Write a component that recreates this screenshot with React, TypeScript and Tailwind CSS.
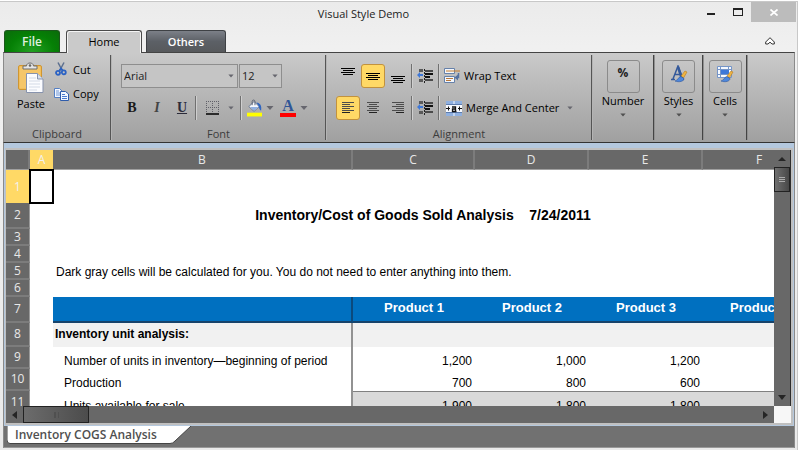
import type { ReactNode } from 'react';

const buttonBase = 'flex h-6 w-6 shrink-0 items-center justify-center';
const activeButton = 'rounded-[3px] border border-[#c2923d] bg-[#ffd966]';

function Caret({ size = 'w-2', color = 'text-[#66666e]' }: { size?: string; color?: string }) {
  return (
    <svg viewBox="0 0 8 4" className={`h-1 shrink-0 ${size} ${color}`} aria-hidden="true">
      <path d="M0.5 0h7L4 4z" fill="currentColor" />
    </svg>
  );
}

function Divider() {
  return <span className="h-6 w-px shrink-0 bg-[#707070] shadow-[1px_0_0_#cfcfcf]" />;
}

function Group({ label, className, children }: { label: string; className: string; children: ReactNode }) {
  return (
    <section aria-label={label} className={`my-0.5 mr-px flex shrink-0 flex-col border-r border-[#555] shadow-[1px_0_0_#b4b4b4] ${className}`}>
      <div className="flex-1">{children}</div>
      <div className="h-4 text-center text-[11px] leading-5 text-[#3c3c3c]">{label}</div>
    </section>
  );
}

function CollapsedGroup({ label, className, children }: { label: string; className: string; children: ReactNode }) {
  return (
    <button type="button" className={`my-0.5 mr-px flex shrink-0 flex-col items-center border-r border-[#444] pt-[5px] shadow-[1px_0_0_#909090] ${className}`}>
      <span className="flex h-[33px] w-[33px] justify-center rounded-[3px] border border-[#8b8b8b] pt-1">{children}</span>
      <span className="mb-1 text-[11px] leading-4 text-black">{label}</span>
      <Caret size="w-1.5" color="text-[#505050]" />
    </button>
  );
}

function PasteIcon() {
  return (
    <svg width="28" height="32" viewBox="0 0 28 32" aria-hidden="true">
      <rect x="1.5" y="3.500" width="23" height="24" rx="1.500" fill="#f2be5a" stroke="#cf9632" />
      <rect x="3" y="5" width="20" height="21" fill="#f8cd78" opacity=".5" />
      <path d="M6 7V4h3.500c0-4 7-4 7 0H20v3z" fill="#e6e6e6" stroke="#6d6d6d" />
      <circle cx="13" cy="3.500" r="1.300" fill="#666" />
      <path d="M9.500 11.500h11l5.500 5.500v13.500H9.500z" fill="#fbfcff" stroke="#8793ad" />
      <path d="M20.500 11.500V17H26" fill="#d8e0ee" stroke="#8793ad" />
      <path d="M12 16h7M12 19h11M12 22h11M12 25h11M12 28h8" stroke="#d3dae6" />
    </svg>
  );
}

function CutIcon() {
  return (
    <svg width="12" height="14" viewBox="0 0 12 14" aria-hidden="true">
      <path d="M3 0.500 7.500 9M9 0.500 4.500 9" stroke="#5c6f8e" strokeWidth="1.500" fill="none" />
      <circle cx="3" cy="10.800" r="2" fill="none" stroke="#2b62c4" strokeWidth="1.800" />
      <circle cx="8.800" cy="10.300" r="2" fill="none" stroke="#2b62c4" strokeWidth="1.800" />
      <path d="M4.500 8.500 6 6.500l1.800 2" stroke="#2b62c4" strokeWidth="1.800" fill="none" />
    </svg>
  );
}

function CopyIcon() {
  return (
    <svg width="15" height="13" viewBox="0 0 15 13" aria-hidden="true">
      <path d="M.5.500h5L8 3v6.500H.5z" fill="#f4f8ff" stroke="#5580c4" />
      <path d="M2 3h3M2 5h4M2 7h4" stroke="#6f96d4" />
      <path d="M6.500 3.500h5L14.500 6v6.500h-8z" fill="#f4f8ff" stroke="#2f5cab" />
      <path d="M8 6.500h3M8 8.500h5M8 10.500h5" stroke="#4a7bd0" />
    </svg>
  );
}

function BordersIcon() {
  return (
    <svg width="14" height="14" viewBox="0 0 14 14" aria-hidden="true">
      <path d="M0 .5h13M0 6.500h13M.5 0v12M6.500 0v12M12.500 0v12" stroke="#606068" strokeDasharray="1 1" />
      <path d="M0 13h13" stroke="#000" strokeWidth="1.500" />
    </svg>
  );
}

function FillIcon() {
  return (
    <svg width="16" height="18" viewBox="0 0 16 18" aria-hidden="true">
      <path d="M7.500 2 13 7.500 7.500 12.500 2 7.500z" fill="#f4f7fc" stroke="#60708e" />
      <path d="M3.500 8h8.500L7.500 12z" fill="#8fb0e2" />
      <path d="M5.500 6V2c0-2 3-2 3 0v4" fill="none" stroke="#5a6272" />
      <path d="M10 3c4 .5 6 3 5 9-2-1-2-4-3-6z" fill="#2e64c0" />
      <path d="M0 14h16v4H0z" fill="#ff0" />
    </svg>
  );
}

function FontColorIcon() {
  return (
    <span className="flex w-4 flex-col items-center">
      <span className="h-3.5 font-['Liberation_Serif',serif] text-base leading-[14px] font-bold text-[#2f5597]">A</span>
      <span className="h-1 w-4 bg-[#f00]" />
    </span>
  );
}

function Lines({ offset, align }: { offset: 'top' | 'middle' | 'bottom' | 'text'; align: 'left' | 'center' | 'right' }) {
  if (offset === 'text') {
    return (
      <svg width="14" height="12" viewBox="0 0 14 12" aria-hidden="true">
        {[12, 8, 12, 8, 12, 8].map((width, row) => (
          <rect
            key={row}
            x={align === 'left' ? 1 : align === 'right' ? 13 - width : (14 - width) / 2}
            y={row * 2}
            width={width}
            height="1"
            fill={row === 5 ? '#222' : '#4c4c4c'}
          />
        ))}
      </svg>
    );
  }
  const y = offset === 'top' ? 2 : offset === 'middle' ? 7 : 10;
  return (
    <svg width="14" height="20" viewBox="0 0 14 20" aria-hidden="true">
      <path d={`M0 ${y + 0.5}h14M2 ${y + 2.5}h10M0 ${y + 4.5}h14M2 ${y + 6.5}h10`} stroke="#000" />
    </svg>
  );
}

function IndentIcon() {
  return (
    <svg width="16" height="15" viewBox="0 0 16 15" aria-hidden="true">
      <path d="M2 0h4v3H2zM2 10h4v3H2z" fill="#5a5a5a" />
      <path d="M8 1h8v2H8zM8 10h8v2H8z" fill="#4a4a4a" />
      <path d="M8 4h8v2H8zM8 7h5v2H8z" fill="#111" />
      <path d="M7.500 0v15" stroke="#222" strokeDasharray="2 1" />
      <path d="M0 6l3-3v2h3v2H3v2z" fill="#3e78d8" />
    </svg>
  );
}

function WrapIcon() {
  return (
    <svg width="16" height="16" viewBox="0 0 16 16" aria-hidden="true">
      <path d="M.5 .5h10v5H.5zM.5 8.500h10v6H.5z" fill="#f4f7fc" stroke="#6681aa" />
      <path d="M2 3h14" stroke="#c67c2c" />
      <path d="M2 10.500h7M2 12.500h5" stroke="#b8783c" />
      <path d="M14.500 5v4.500H13" fill="none" stroke="#5671a0" strokeWidth="1.500" />
      <path d="M14 6.500v6L10.500 9.500z" fill="#5671a0" />
    </svg>
  );
}

function MergeIcon() {
  return (
    <svg width="16" height="15" viewBox="0 0 16 15" aria-hidden="true">
      <path d="M0 0h16v15H0z" fill="#f7faff" />
      <path d="M0 0h7.500v3H0zM8.500 0H16v3H8.500zM0 12h7.500v3H0zM8.500 12H16v3H8.500z" fill="#8fb0e0" />
      <path d="M0 3.500h16M0 11.500h16" stroke="#5d7cae" />
      <path d="M0 7.500h4M2.500 5.500v4M12 7.500h4M13.500 5.500v4" stroke="#111" />
      <path d="M6 6h3.500v4.500M9.500 8H6.500v2.500h4" fill="none" stroke="#111" strokeWidth="1.300" />
    </svg>
  );
}

function Brush() {
  return (
    <>
      <path d="m11 11 4-5 2 1-3.500 6z" fill="#efb443" stroke="#b67c21" strokeWidth=".6" />
      <path d="M5 16c3-.5 3-4 6-4.500l3 2c0 3-5 4-9 2.500z" fill="#4d87dc" stroke="#2a559f" strokeWidth=".6" />
    </>
  );
}

function StylesIcon() {
  return (
    <svg width="18" height="18" viewBox="0 0 18 18" aria-hidden="true">
      <path d="M1 14.500h4M8 14.500h6M3 14 8 1l5 13M5 9.500h6" fill="none" stroke="#34599a" strokeWidth="1.500" />
      <path d="m8 2 4 12" stroke="#34599a" strokeWidth="2.500" />
      <Brush />
    </svg>
  );
}

function CellsIcon() {
  return (
    <svg width="18" height="18" viewBox="0 0 18 18" aria-hidden="true">
      <path d="M1.500 1.500h14v11h-14z" fill="#f5f9ff" stroke="#7595c8" />
      <path d="M4.500 1v11M1 4.500h15M1 9.500h15M12.500 1v11" stroke="#7595c8" />
      <path d="M5 5h8v4H5z" fill="#3d78d8" />
      <Brush />
    </svg>
  );
}

function TitleBar() {
  return (
    <header className="flex h-7 shrink-0 pr-px">
      <h1 className="flex-1 pl-[30px] text-center text-[11px] leading-6 text-[#222]">Visual Style Demo</h1>
      <button type="button" aria-label="Minimize" className="flex h-5 w-7 items-center justify-center">
        <span className="mt-1 h-0.5 w-2 bg-[#222]" />
      </button>
      <button type="button" aria-label="Maximize" className="flex h-5 w-[26px] items-center justify-center">
        <span className="h-2 w-2.5 border border-t-2 border-[#222]" />
      </button>
      <button type="button" aria-label="Close" className="flex h-5 w-[45px] items-center justify-center bg-[#bcbcbc]">
        <svg width="8" height="7" viewBox="0 0 8 7" aria-hidden="true">
          <path d="m.5.500 7 6m0-6-7 6" stroke="#fff" strokeWidth="1.700" />
        </svg>
      </button>
    </header>
  );
}

function RibbonTabs() {
  return (
    <nav className="relative flex h-[22px] shrink-0 items-end pl-1 text-[11px] leading-4">
      <button type="button" className="mr-1.5 h-[22px] w-14 rounded-t-[3px] border border-b-0 border-[#1b571b] bg-[radial-gradient(ellipse_at_bottom,#23a023,#058005_60%,#0b6b0b)] text-xs font-semibold text-[#dff0df]">
        File
      </button>
      <button type="button" aria-current="page" className="z-10 -mb-px mr-1 h-[23px] w-[76px] rounded-t-[3px] border border-b-0 border-[#4a4a4a] bg-[#cacaca] pb-px text-black shadow-[inset_1px_1px_0_#f4f4f4,inset_-1px_0_0_#f4f4f4]">
        Home
      </button>
      <button type="button" className="h-[22px] w-20 rounded-t-[3px] border border-b-0 border-[#3e4145] bg-linear-to-b from-[#7c8088] via-[#5c6066] to-[#57595c] font-semibold text-white">
        Others
      </button>
      <button type="button" aria-label="Collapse ribbon" className="mr-[21px] ml-auto flex h-[22px] w-3 items-center justify-center">
        <svg width="10" height="8" viewBox="0 0 10 8" aria-hidden="true">
          <path d="M5 .7 9.300 5v2H7L5 5.200 3 7H.7V5z" fill="#fff" stroke="#333" />
        </svg>
      </button>
    </nav>
  );
}

function Ribbon() {
  return (
    <div className="mr-0.5 ml-[3px] flex h-[91px] shrink-0 overflow-hidden border border-x-[#8a8a8a] border-t-[#444] border-b-[#333] bg-linear-to-b from-[#cacaca] to-[#a0a0a0] text-[11px] leading-4">
      <Group label="Clipboard" className="w-[107px]">
        <div className="flex pt-[7px]">
          <button type="button" className="ml-[5px] flex w-11 flex-col items-center">
            <PasteIcon />
            <span className="pt-0.5">Paste</span>
          </button>
          <div className="flex flex-col">
            <button type="button" className="flex h-6 items-start gap-1">
              <span className="flex w-4 justify-center"><CutIcon /></span>Cut
            </button>
            <button type="button" className="flex h-6 items-start gap-1">
              <span className="flex w-4 justify-center pt-0.5"><CopyIcon /></span>Copy
            </button>
          </div>
        </div>
      </Group>

      <Group label="Font" className="w-[214px]">
        <div className="flex gap-px pt-[9px] pl-[9px]">
          <label className="relative flex items-center">
            <select aria-label="Font family" className="h-6 w-[117px] appearance-none border border-[#8e8e8e] bg-[#c5c5c5] pl-0.5 leading-5 text-[#222]">
              <option>Arial</option>
            </select>
            <span className="pointer-events-none absolute right-1 flex"><Caret size="w-1.5" /></span>
          </label>
          <label className="relative flex items-center">
            <select aria-label="Font size" className="h-6 w-[43px] appearance-none border border-[#8e8e8e] bg-[#c5c5c5] pl-0.5 leading-5 text-[#222]">
              <option>12</option>
            </select>
            <span className="pointer-events-none absolute right-1 flex"><Caret size="w-1.5" /></span>
          </label>
        </div>
        <div className="flex items-center pt-2 pl-2 font-['Liberation_Serif',serif] text-sm font-bold text-[#1a1a1a]">
          <button type="button" aria-label="Bold" className={`${buttonBase} mr-px`}>B</button>
          <button type="button" aria-label="Italic" className={`${buttonBase} mr-px text-[#444] italic`}>I</button>
          <button type="button" aria-label="Underline" className={`${buttonBase} mr-px text-[#2b2b3a] underline`}>U</button>
          <Divider />
          <button type="button" aria-label="Borders" className="flex h-6 w-11 items-center gap-2 pl-2.5"><BordersIcon /><Caret size="w-1.5" /></button>
          <Divider />
          <button type="button" aria-label="Fill color" className="flex h-6 w-[33px] items-center gap-1 pl-1.5"><FillIcon /><Caret /></button>
          <button type="button" aria-label="Font color" className="flex h-6 w-[33px] items-center gap-1 pl-1.5"><FontColorIcon /><Caret /></button>
        </div>
      </Group>

      <Group label="Alignment" className="w-[265px]">
        <div className="flex flex-col gap-2 pt-[9px] pl-[9px]">
          <div className="flex items-center gap-px">
            <button type="button" aria-label="Top align" className={buttonBase}><Lines offset="top" align="center" /></button>
            <button type="button" aria-label="Middle align" aria-pressed="true" className={`${buttonBase} ${activeButton}`}><Lines offset="middle" align="center" /></button>
            <button type="button" aria-label="Bottom align" className={buttonBase}><Lines offset="bottom" align="center" /></button>
            <Divider />
            <button type="button" aria-label="Decrease indent" className={buttonBase}><IndentIcon /></button>
            <Divider />
            <button type="button" className="flex h-6 items-center gap-1 pl-1"><WrapIcon />Wrap Text</button>
          </div>
          <div className="flex items-center gap-px">
            <button type="button" aria-label="Align left" aria-pressed="true" className={`${buttonBase} ${activeButton}`}><Lines offset="text" align="left" /></button>
            <button type="button" aria-label="Align center" className={buttonBase}><Lines offset="text" align="center" /></button>
            <button type="button" aria-label="Align right" className={buttonBase}><Lines offset="text" align="right" /></button>
            <Divider />
            <button type="button" aria-label="Increase indent" className={buttonBase}><IndentIcon /></button>
            <Divider />
            <button type="button" className="flex h-6 items-center gap-1 pl-1.5 whitespace-nowrap">
              <MergeIcon />
              Merge And Center
              <span className="ml-1 flex"><Caret size="w-1.5" /></span>
            </button>
          </div>
        </div>
      </Group>

      <CollapsedGroup label="Number" className="w-[61px]"><span className="text-xs leading-4 font-bold text-[#222]">%</span></CollapsedGroup>
      <CollapsedGroup label="Styles" className="w-12"><StylesIcon /></CollapsedGroup>
      <CollapsedGroup label="Cells" className="w-[43px]"><CellsIcon /></CollapsedGroup>
    </div>
  );
}

const rowHead = 'border-r border-b-2 border-r-[#9a9a9a] border-b-[#7c7c7c] bg-[#686868] p-0 text-center text-xs leading-[14px] font-normal text-[#e8e8e8]';
const colHead = 'border-r-2 border-b border-r-[#7c7c7c] border-b-[#a0a0a0] bg-[#686868] p-0 text-center text-xs leading-4 font-normal text-[#e8e8e8]';
const cellFont = "font-['Liberation_Sans',Arial,sans-serif]";
const productHead = `${cellFont} border-b-2 border-[#17436b] bg-[#0070c0] p-0 pb-0.5 text-center text-[13px] leading-4 font-bold text-white`;
const labelCell = `${cellFont} border-r-2 border-[#929292] p-0 pt-1.5 pl-[11px] text-left text-xs leading-4 font-normal text-black`;
const numberCell = `${cellFont} p-0 pt-1.5 pr-[3px] text-right text-xs leading-4 text-black`;

const products = ['Product 1', 'Product 2', 'Product 3', 'Product 4'];

function Sheet() {
  return (
    <table className="w-[811px] table-fixed border-separate border-spacing-0">
      <colgroup>
        <col className="w-6" />
        <col className="w-[23px]" />
        <col className="w-[300px]" />
        <col className="w-[122px]" />
        <col className="w-[114px]" />
        <col className="w-[114px]" />
        <col className="w-[114px]" />
      </colgroup>
      <thead>
        <tr className="h-5">
          <td className={colHead} />
          <th scope="col" className="border-b border-[#a0a0a0] bg-[#ffd966] p-0 text-xs leading-4 font-normal text-[#f2f2f2]">A</th>
          {['B', 'C', 'D', 'E', 'F'].map((letter) => (
            <th key={letter} scope="col" className={colHead}>{letter}</th>
          ))}
        </tr>
      </thead>
      <tbody>
        <tr className="h-[33px]">
          <th scope="row" className="border-r border-[#9a9a9a] bg-[#ffd966] p-0 text-xs leading-4 font-normal text-[#f2f2f2]">1</th>
          <td className="outline-2 -outline-offset-1 outline-black" />
          <td colSpan={5} />
        </tr>
        <tr className="h-[26px]">
          <th scope="row" className={rowHead}>2</th>
          <td />
          <td colSpan={5} className={`${cellFont} p-0 pr-6 pb-0.5 text-center text-sm leading-4 font-bold whitespace-pre text-black`}>
            {'Inventory/Cost of Goods Sold Analysis    7/24/2011'}
          </td>
        </tr>
        <tr className="h-[17px]"><th scope="row" className={rowHead}>3</th><td colSpan={6} /></tr>
        <tr className="h-[17px]"><th scope="row" className={rowHead}>4</th><td colSpan={6} /></tr>
        <tr className="h-[17px]">
          <th scope="row" className={rowHead}>5</th>
          <td />
          <td colSpan={5} className={`${cellFont} p-0 pl-[3px] text-xs leading-4 text-black`}>
            Dark gray cells will be calculated for you. You do not need to enter anything into them.
          </td>
        </tr>
        <tr className="h-[17px]"><th scope="row" className={rowHead}>6</th><td colSpan={6} /></tr>
        <tr className="h-[26px]">
          <th scope="row" className={rowHead}>7</th>
          <td />
          <td className="border-r-2 border-b-2 border-r-[#0b4a7d] border-b-[#17436b] bg-[#0070c0]" />
          {products.map((name) => <th key={name} scope="col" className={productHead}>{name}</th>)}
        </tr>
        <tr className="h-6">
          <th scope="row" className={rowHead}>8</th>
          <td />
          <th scope="row" className={`${cellFont} border-r-2 border-[#929292] bg-[#f1f1f1] p-0 pb-0.5 pl-0.5 text-left text-xs leading-4 font-bold text-black`}>
            Inventory unit analysis:
          </th>
          <td colSpan={4} className="bg-[#f1f1f1]" />
        </tr>
        <tr className="h-[22px]">
          <th scope="row" className={rowHead}>9</th>
          <td />
          <td className={labelCell}>Number of units in inventory—beginning of period</td>
          {['1,200', '1,000', '1,200'].map((value, i) => <td key={i} className={numberCell}>{value}</td>)}
          <td />
        </tr>
        <tr className="h-[22px]">
          <th scope="row" className={rowHead}>10</th>
          <td />
          <td className={labelCell}>Production</td>
          {['700', '800', '600'].map((value, i) => <td key={i} className={numberCell}>{value}</td>)}
          <td />
        </tr>
        <tr className="h-[22px]">
          <th scope="row" className={rowHead}>11</th>
          <td />
          <td className={labelCell}>Units available for sale</td>
          {['1,900', '1,800', '1,800'].map((value, i) => (
            <td key={i} className={`${numberCell} border-t border-[#808080] bg-[#d9d9d9]`}>{value}</td>
          ))}
          <td className="border-t border-[#808080] bg-[#d9d9d9]" />
        </tr>
      </tbody>
    </table>
  );
}

function Workbook() {
  return (
    <main className="mr-0.5 ml-[3px] flex min-h-0 flex-1 flex-col border-x border-[#8a8a8a] bg-[#b4c8de]">
      <div className="mt-[5px] mr-px ml-px flex min-h-0 flex-1 flex-col border-t-2 border-r-2 border-b-2 border-l border-[#c0c0c0] bg-white">
        <div className="flex min-h-0 flex-1">
          <div className="min-w-0 flex-1 overflow-hidden"><Sheet /></div>
          <div className="flex w-[17px] shrink-0 flex-col items-center border-r border-[#2e2e2e] bg-[#686868]">
            <button type="button" aria-label="Scroll up" className="flex h-[17px] w-4 items-center justify-center">
              <svg width="8" height="4" aria-hidden="true"><path d="M4 0l4 4H0z" fill="#252525" /></svg>
            </button>
            <div className="flex h-[25px] w-4 flex-col items-center justify-center gap-px border border-[#222] bg-linear-to-r from-[#707070] to-[#484848]">
              <span className="h-px w-1.5 bg-[#aaa]" />
              <span className="h-px w-1.5 bg-[#aaa]" />
              <span className="h-px w-1.5 bg-[#aaa]" />
            </div>
            <button type="button" aria-label="Scroll down" className="mt-auto flex h-[17px] w-4 items-center justify-center">
              <svg width="8" height="5" aria-hidden="true"><path d="M0 0h8L4 5z" fill="#252525" /></svg>
            </button>
          </div>
        </div>
        <div className="flex h-[17px] shrink-0 bg-[#f7f7f7]">
          <div className="mr-[17px] flex flex-1 bg-[#686868]">
            <button type="button" aria-label="Scroll left" className="flex h-[17px] w-[17px] items-center justify-center">
              <svg width="5" height="8" aria-hidden="true"><path d="M5 0v8L0 4z" fill="#252525" /></svg>
            </button>
            <div className="flex h-[17px] w-[66px] items-center justify-center gap-0.5 border border-[#222] bg-linear-to-r from-[#6c6c6c] to-[#4c4c4c]">
              <span className="h-1.5 w-0.5 bg-[#505050]" />
              <span className="h-1.5 w-px bg-[#505050]" />
            </div>
            <button type="button" aria-label="Scroll right" className="ml-auto flex h-[17px] w-[17px] items-center justify-center">
              <svg width="5" height="8" aria-hidden="true"><path d="M0 0v8l5-4z" fill="#252525" /></svg>
            </button>
          </div>
        </div>
      </div>
      <div className="flex h-[23px] shrink-0 border-t border-b border-t-[#b4c8de] border-b-[#999] bg-[#717171]">
        <button type="button" className="relative ml-[3px] h-[18px] w-[184px] pl-2 text-left text-xs leading-4 font-semibold text-[#505050]">
          <svg className="absolute inset-0" width="186" height="19" viewBox="0 0 186 19" aria-hidden="true">
            <path d="M0 0h184l-16 15q-2 2.500-5 2.500H3Q0 17.500 0 14z" fill="#fff" />
            <path d="M0 0v14q0 3.500 3 3.500h160q3 0 5-2.500L184 0" fill="none" stroke="#444" />
          </svg>
          <span className="relative">Inventory COGS Analysis</span>
        </button>
      </div>
    </main>
  );
}

export default function App() {
  return (
    <div className="h-screen bg-white pt-px pr-0.5 font-['Open_Sans','Noto_Sans',sans-serif]">
      <div className="flex h-full flex-col border-t border-r border-[#c8c8c8] bg-linear-to-b from-[#ebebeb] via-[#f0f0f0] via-10% to-[#eaeaea] pb-0.5">
        <TitleBar />
        <RibbonTabs />
        <Ribbon />
        <Workbook />
      </div>
    </div>
  );
}
